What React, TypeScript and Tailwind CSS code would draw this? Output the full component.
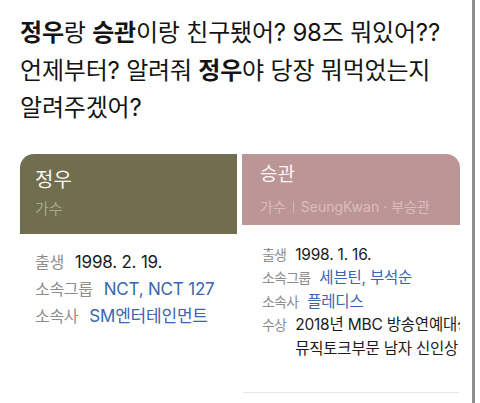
import React from "react";

type Row = {
  label: string;
  value: React.ReactNode;
  link?: boolean;
};

const font = { fontFamily: 'Inter, "Noto Sans CJK KR", sans-serif' };

function InfoRows({
  rows,
  className,
  labelClass,
  valueClass,
}: {
  rows: Row[];
  className: string;
  labelClass: string;
  valueClass: string;
}) {
  return (
    <div className={className}>
      {rows.map((r) => (
        <div key={r.label} className="flex whitespace-nowrap">
          <span className={`text-[#8d8d8d] shrink-0 ${labelClass}`}>{r.label}</span>
          <span className={`${valueClass} ${r.link ? "text-[#3a66ad]" : "text-[#1c1c1c]"}`}>{r.value}</span>
        </div>
      ))}
    </div>
  );
}

export default function App() {
  return (
    <div className="w-[480px] h-[403px] bg-white flex overflow-hidden" style={font}>
      <div className="w-[472px] shrink-0 flex flex-col">
        {/* post text */}
        <p className="pt-[14px] px-[20px] text-[24px] leading-[37.5px] text-[#141414] tracking-[-0.2px] whitespace-nowrap">
          <b className="font-bold">정우</b>랑 <b className="font-bold">승관</b>이랑 친구됐어? 98즈 뭐있어??
          <br />
          언제부터? 알려줘 <b className="font-bold">정우</b>야 당장 뭐먹었는지
          <br />
          알려주겠어?
        </p>

        {/* cards */}
        <div className="mt-[27px] ml-[20px] flex gap-[5px]">
          <div className="w-[217px] shrink-0">
            <div className="h-[80px] bg-[#706e4e] rounded-tl-[14px] pl-[15px] pt-[14px]">
              <div className="text-[20px] leading-[24px] text-[#f7f6ef]">정우</div>
              <div className="mt-[6px] text-[15px] leading-[22px] text-[#a8a78b]">가수</div>
            </div>
            <InfoRows
              className="pl-[15px] pt-[15px] leading-[27px]"
              labelClass="text-[16px] tracking-[-0.3px] mr-[11px]"
              valueClass="text-[17px] tracking-[-0.2px]"
              rows={[
                { label: "출생", value: "1998. 2. 19." },
                { label: "소속그룹", value: "NCT, NCT 127", link: true },
                { label: "소속사", value: "SM엔터테인먼트", link: true },
              ]}
            />
          </div>

          <div className="w-[218px] shrink-0 overflow-hidden">
            <div className="h-[71px] bg-[#bc9596] rounded-tr-[14px] pl-[18px] pt-[9px] whitespace-nowrap">
              <div className="text-[19px] leading-[24px] text-[#fbf5f5]">승관</div>
              <div className="mt-[10px] text-[14px] leading-[20px] text-[#dcbdbd] flex items-center">
                <span>가수</span>
                <span className="mx-[7px] w-px h-[12px] bg-[#d6b5b5]" />
                <span>SeungKwan</span>
                <span className="mx-[4px]">·</span>
                <span>부승관</span>
              </div>
            </div>
            <InfoRows
              className="pl-[20px] pt-[18px] leading-[23.5px]"
              labelClass="text-[14px] tracking-[-0.8px] mr-[9px]"
              valueClass="text-[15.5px] tracking-[-0.2px]"
              rows={[
                { label: "출생", value: "1998. 1. 16." },
                { label: "소속그룹", value: "세븐틴, 부석순", link: true },
                { label: "소속사", value: "플레디스", link: true },
                {
                  label: "수상",
                  value: (
                    <>
                      2018년 MBC 방송연예대상
                      <br />
                      뮤직토크부문 남자 신인상
                    </>
                  ),
                },
              ]}
            />
            <div className="mt-[32px] mx-[1px] h-px bg-[#e6e6e6]" />
          </div>
        </div>
      </div>
      <div className="w-[3px] shrink-0 bg-[#8e8e8e]" />
      <div className="flex-1 bg-white" />
    </div>
  );
}
